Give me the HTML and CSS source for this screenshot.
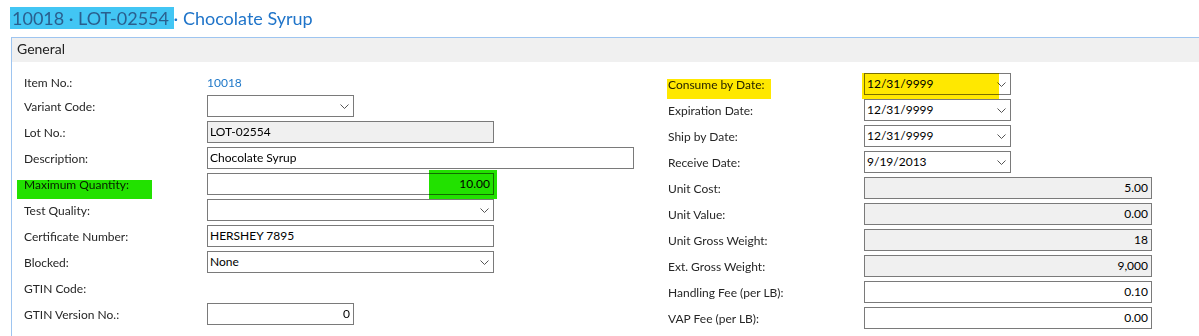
FILE: index.html
```html
<!DOCTYPE html>
<html lang="en">
<head>
    <meta charset="UTF-8">
    <meta name="viewport" content="width=device-width, initial-scale=1.0">
    <title>Lot No. Information Card</title>
    <link rel="stylesheet" href="styles.css">
</head>
<body>
    <div class="page-title"><span class="hl-cyan">10018 · LOT-02554 </span>· Chocolate Syrup</div>

    <section class="fasttab">
        <div class="fasttab-head">General</div>
        <div class="fasttab-body">
            <div class="col col-left">
                <div class="row row-first">
                    <span class="label">Item No.:</span>
                    <span class="value link">10018</span>
                </div>
                <div class="row">
                    <span class="label">Variant Code:</span>
                    <div class="field w-sm select"><span></span><svg class="chev" width="9" height="5" viewBox="0 0 9 5"><polyline points="0.5,0.5 4.5,4.5 8.5,0.5" fill="none" stroke="#555" stroke-width="1"/></svg></div>
                </div>
                <div class="row">
                    <span class="label">Lot No.:</span>
                    <div class="field w-md readonly">LOT-02554</div>
                </div>
                <div class="row">
                    <span class="label">Description:</span>
                    <div class="field w-lg">Chocolate Syrup</div>
                </div>
                <div class="row">
                    <span class="label">Maximum Quantity:<i class="marker green-label"></i></span>
                    <div class="field w-md num">10.00<i class="marker green-value"></i></div>
                </div>
                <div class="row">
                    <span class="label">Test Quality:</span>
                    <div class="field w-md select"><span></span><svg class="chev" width="9" height="5" viewBox="0 0 9 5"><polyline points="0.5,0.5 4.5,4.5 8.5,0.5" fill="none" stroke="#555" stroke-width="1"/></svg></div>
                </div>
                <div class="row">
                    <span class="label">Certificate Number:</span>
                    <div class="field w-md">HERSHEY 7895</div>
                </div>
                <div class="row">
                    <span class="label">Blocked:</span>
                    <div class="field w-md select"><span>None</span><svg class="chev" width="9" height="5" viewBox="0 0 9 5"><polyline points="0.5,0.5 4.5,4.5 8.5,0.5" fill="none" stroke="#555" stroke-width="1"/></svg></div>
                </div>
                <div class="row">
                    <span class="label">GTIN Code:</span>
                    <span class="value"></span>
                </div>
                <div class="row">
                    <span class="label">GTIN Version No.:</span>
                    <div class="field w-sm num">0</div>
                </div>
            </div>

            <div class="col col-right">
                <div class="row">
                    <span class="label">Consume by Date:<i class="marker yellow-label"></i></span>
                    <div class="field w-sm select"><span>12/31/9999</span><svg class="chev" width="9" height="5" viewBox="0 0 9 5"><polyline points="0.5,0.5 4.5,4.5 8.5,0.5" fill="none" stroke="#555" stroke-width="1"/></svg><i class="marker yellow-value"></i></div>
                </div>
                <div class="row">
                    <span class="label">Expiration Date:</span>
                    <div class="field w-sm select"><span>12/31/9999</span><svg class="chev" width="9" height="5" viewBox="0 0 9 5"><polyline points="0.5,0.5 4.5,4.5 8.5,0.5" fill="none" stroke="#555" stroke-width="1"/></svg></div>
                </div>
                <div class="row">
                    <span class="label">Ship by Date:</span>
                    <div class="field w-sm select"><span>12/31/9999</span><svg class="chev" width="9" height="5" viewBox="0 0 9 5"><polyline points="0.5,0.5 4.5,4.5 8.5,0.5" fill="none" stroke="#555" stroke-width="1"/></svg></div>
                </div>
                <div class="row">
                    <span class="label">Receive Date:</span>
                    <div class="field w-sm select"><span>9/19/2013</span><svg class="chev" width="9" height="5" viewBox="0 0 9 5"><polyline points="0.5,0.5 4.5,4.5 8.5,0.5" fill="none" stroke="#555" stroke-width="1"/></svg></div>
                </div>
                <div class="row">
                    <span class="label">Unit Cost:</span>
                    <div class="field w-xl num readonly">5.00</div>
                </div>
                <div class="row">
                    <span class="label">Unit Value:</span>
                    <div class="field w-xl num readonly">0.00</div>
                </div>
                <div class="row">
                    <span class="label">Unit Gross Weight:</span>
                    <div class="field w-xl num readonly">18</div>
                </div>
                <div class="row">
                    <span class="label">Ext. Gross Weight:</span>
                    <div class="field w-xl num readonly">9,000</div>
                </div>
                <div class="row">
                    <span class="label">Handling Fee (per LB):</span>
                    <div class="field w-xl num">0.10</div>
                </div>
                <div class="row">
                    <span class="label">VAP Fee (per LB):</span>
                    <div class="field w-xl num">0.00</div>
                </div>
            </div>
        </div>
    </section>
</body>
</html>
```

FILE: styles.css
```css
body {
    font-family: "Segoe UI", Lato, "Noto Sans", sans-serif;
    font-size: 12px;
    color: #262626;
    margin: 0;
    background: #fff;
    overflow: hidden;
}
.page-title {
    font-size: 18px;
    line-height: 20px;
    color: #1f74c9;
    padding: 8px 0 0 10px;
    height: 30px;
    box-sizing: border-box;
    white-space: nowrap;
}
.hl-cyan {
    background-color: #42c6f4;
    color: #2a5f8e;
    padding: 0 0 0 2px;
}
.fasttab {
    margin: 7px 0 0 11px;
    border-top: 1px solid #9ec5f0;
    border-left: 1px solid #9ec5f0;
    height: 300px;
}
.fasttab-head {
    background-color: #f0f0f0;
    height: 24px;
    line-height: 22px;
    font-size: 14px;
    color: #222;
    padding-left: 5px;
}
.fasttab-body {
    display: flex;
    padding-left: 12px;
}
.col {
    display: flex;
    flex-direction: column;
    gap: 4px;
}
.col-left {
    width: 644px;
    padding-top: 11px;
}
.col-right {
    padding-top: 11px;
}
.row {
    display: flex;
    align-items: center;
    height: 22px;
}
.row-first {
    height: 18px;
}
.label {
    position: relative;
    white-space: nowrap;
}
.col-left .label {
    width: 183px;
}
.col-right .label {
    width: 196px;
}
.value.link {
    color: #1f78c8;
}
.field {
    position: relative;
    box-sizing: border-box;
    height: 22px;
    line-height: 20px;
    border: 1px solid #7a7a7a;
    padding: 0 3px 0 2px;
    color: #000;
    background: #fff;
    white-space: nowrap;
}
.field.readonly {
    background: #f0f0f0;
}
.field.num {
    text-align: right;
}
.field.select {
    display: flex;
    justify-content: space-between;
    align-items: center;
    padding-right: 4px;
}
.chev {
    display: block;
}
.w-sm { width: 147px; }
.w-md { width: 287px; }
.w-lg { width: 427px; }
.w-xl { width: 288px; }

/* marker highlights drawn over the screenshot */
.marker {
    position: absolute;
    display: block;
    mix-blend-mode: multiply;
    pointer-events: none;
}
.green-label {
    background: #22e100;
    left: -7px;
    top: 3px;
    width: 135px;
    height: 19px;
}
.green-value {
    background: #22e100;
    left: 221px;
    top: -4px;
    width: 68px;
    height: 29px;
}
.yellow-label {
    background: #ffe800;
    left: -1px;
    top: 2px;
    width: 104px;
    height: 20px;
}
.yellow-value {
    background: #ffe800;
    left: -3px;
    top: -1px;
    width: 137px;
    height: 26px;
}
```
